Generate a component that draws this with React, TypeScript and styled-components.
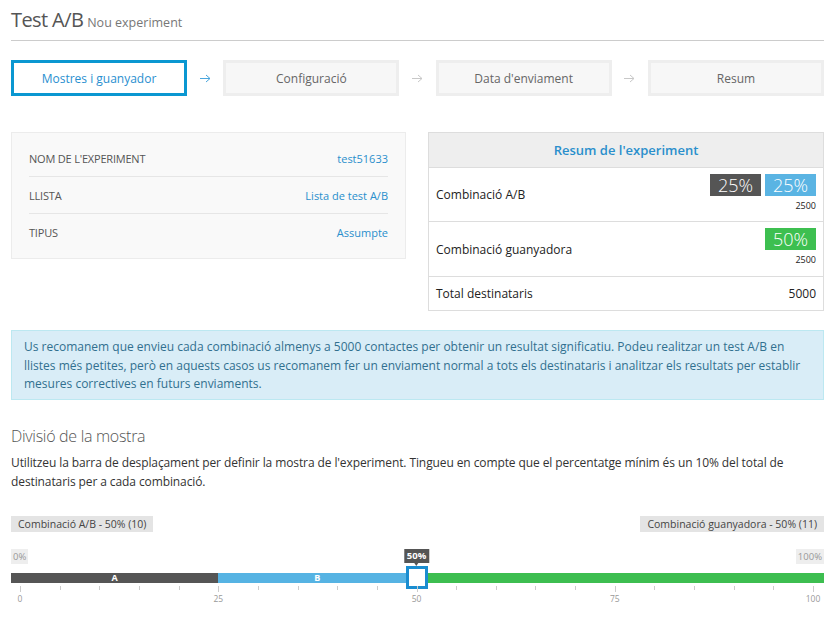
import React from 'react';
import styled, { createGlobalStyle } from 'styled-components';

const GlobalStyle = createGlobalStyle`
  html, body {
    margin: 0;
    padding: 0;
    background: #fff;
  }
  body {
    font-family: 'Open Sans', 'Liberation Sans', Arial, sans-serif;
    color: #333;
  }
`;

const Page = styled.div`
  width: 813px;
  padding: 0 7px 0 11px;
`;

const Header = styled.div`
  display: flex;
  align-items: baseline;
  align-content: flex-end;
  flex-wrap: wrap;
  gap: 4px;
  height: 41px;
  box-sizing: border-box;
  padding-bottom: 7px;
  border-bottom: 1px solid #ccc;
`;

const Title = styled.h1`
  margin: 0;
  font-size: 20px;
  font-weight: 400;
  color: #555;
  letter-spacing: -0.6px;
`;

const Subtitle = styled.span`
  font-size: 12.5px;
  color: #777;
`;

const Steps = styled.div`
  display: flex;
  align-items: center;
  margin-top: 19px;
`;

const Step = styled.div<{ active?: boolean }>`
  flex: 0 0 176px;
  height: 36px;
  box-sizing: border-box;
  border: 3px solid ${(p) => (p.active ? '#0a97d1' : '#eee')};
  background: ${(p) => (p.active ? '#fff' : '#f7f7f7')};
  color: ${(p) => (p.active ? '#2a8fcf' : '#666')};
  font-size: 12px;
  display: flex;
  align-items: center;
  justify-content: center;
`;

const ArrowCell = styled.div`
  flex: 1;
  display: flex;
  align-items: center;
  justify-content: center;
`;

const Columns = styled.div`
  display: flex;
  gap: 22px;
  margin-top: 36px;
  align-items: flex-start;
`;

const InfoBox = styled.div`
  flex: 0 0 395px;
  box-sizing: border-box;
  height: 127px;
  background: #f9f9f9;
  border: 1px solid #ececec;
  padding: 7px 17px;
`;

const InfoRow = styled.div`
  display: flex;
  justify-content: space-between;
  align-items: center;
  height: 37px;
  box-sizing: border-box;
  font-size: 11px;
  border-bottom: 1px solid #e6e6e6;
  &:last-child {
    border-bottom: none;
  }
`;

const InfoLabel = styled.span`
  color: #555;
  text-transform: uppercase;
  letter-spacing: -0.2px;
`;

const InfoValue = styled.span`
  color: #2a8fcc;
`;

const Summary = styled.div`
  flex: 1;
  border: 1px solid #ddd;
  font-size: 12px;
  color: #222;
`;

const SummaryHead = styled.div`
  height: 34px;
  background: #eee;
  border-bottom: 1px solid #ddd;
  display: flex;
  align-items: center;
  justify-content: center;
  color: #2a8fcc;
  font-size: 13px;
  font-weight: 600;
`;

const SummaryRow = styled.div<{ h: number }>`
  height: ${(p) => p.h}px;
  box-sizing: border-box;
  display: flex;
  align-items: center;
  justify-content: space-between;
  padding: 0 7px;
  border-bottom: 1px solid #ddd;
  &:last-child {
    border-bottom: none;
  }
`;

const BadgeCol = styled.div`
  display: flex;
  flex-direction: column;
  align-items: flex-end;
  align-self: flex-start;
  padding-top: 6px;
`;

const Badges = styled.div`
  display: flex;
  gap: 4px;
`;

const Badge = styled.span<{ color: string }>`
  width: 51px;
  height: 22px;
  display: flex;
  align-items: center;
  justify-content: center;
  background: ${(p) => p.color};
  color: #fff;
  font-size: 18px;
  font-weight: 300;
  line-height: 1;
`;

const Count = styled.span`
  font-size: 9px;
  color: #222;
  margin-top: 3px;
`;

const Alert = styled.div`
  margin-top: 19px;
  background: #d9edf7;
  border: 1px solid #bce8f1;
  color: #31708f;
  font-size: 12px;
  line-height: 18.5px;
  padding: 7px 12px 5px;
`;

const SectionTitle = styled.h2`
  margin: 25px 0 0;
  font-size: 16px;
  line-height: 22px;
  font-weight: 300;
  color: #555;
  letter-spacing: -0.3px;
`;

const Description = styled.p`
  margin: 6px 0 0;
  font-size: 12px;
  line-height: 19px;
  color: #333;
  letter-spacing: -0.1px;
`;

const LabelRow = styled.div`
  display: flex;
  justify-content: space-between;
  margin-top: 25px;
`;

const GroupLabel = styled.span`
  background: #e4e4e4;
  color: #444;
  font-size: 10.5px;
  height: 16px;
  line-height: 16px;
  padding: 0 7px;
`;

const Slider = styled.div`
  position: relative;
  margin-top: 17px;
  height: 70px;
`;

const EdgeRow = styled.div`
  display: flex;
  justify-content: space-between;
`;

const EdgeLabel = styled.span`
  background: #eee;
  color: #999;
  font-size: 9.5px;
  height: 15px;
  line-height: 15px;
  padding: 0 2px;
`;

const Bar = styled.div`
  display: flex;
  height: 10px;
  margin-top: 9px;
`;

const Segment = styled.div<{ color: string; grow?: boolean }>`
  background: ${(p) => p.color};
  ${(p) => (p.grow ? 'flex: 1;' : '')}
  color: #fff;
  font-size: 9px;
  font-weight: 700;
  line-height: 10px;
  text-align: center;
`;

const Handle = styled.div`
  position: absolute;
  top: 17px;
  width: 22px;
  height: 23px;
  box-sizing: border-box;
  margin-left: -11px;
  background: #fff;
  border: 3px solid #1a8dd0;
`;

const Tip = styled.div`
  position: absolute;
  top: 0;
  transform: translateX(-50%);
  background: #555;
  color: #fff;
  font-size: 9.5px;
  font-weight: 700;
  height: 14px;
  line-height: 14px;
  padding: 0 3px;
  &::after {
    content: '';
    position: absolute;
    left: 50%;
    bottom: -3px;
    margin-left: -2px;
    border-left: 2px solid transparent;
    border-right: 2px solid transparent;
    border-top: 3px solid #555;
  }
`;

const Grid = styled.div`
  position: relative;
  height: 30px;
`;

const Tick = styled.span<{ major?: boolean }>`
  position: absolute;
  top: 3px;
  width: 1px;
  height: ${(p) => (p.major ? 6 : 4)}px;
  background: #ccc;
`;

const TickLabel = styled.span`
  position: absolute;
  top: 10px;
  transform: translateX(-50%);
  font-size: 8.5px;
  color: #999;
`;

const Arrow = ({ color }: { color: string }) => (
  <svg width="11" height="9" viewBox="0 0 11 9">
    <path d="M0 4.5h10M6 1l4 3.5L6 8" fill="none" stroke={color} strokeWidth="1" />
  </svg>
);

const steps = ['Mostres i guanyador', 'Configuració', "Data d'enviament", 'Resum'];

const SCALE_START = 9;
const SCALE_LEN = 793;
const pos = (v: number) => SCALE_START + (SCALE_LEN * v) / 100;

export default function App() {
  const ticks = Array.from({ length: 21 }, (_, i) => i * 5);
  return (
    <Page>
      <GlobalStyle />
      <Header>
        <Title>Test A/B</Title>
        <Subtitle>Nou experiment</Subtitle>
      </Header>

      <Steps>
        {steps.map((s, i) => (
          <React.Fragment key={s}>
            {i > 0 && (
              <ArrowCell>
                <Arrow color={i === 1 ? '#4aa6dd' : '#c8c8c8'} />
              </ArrowCell>
            )}
            <Step active={i === 0}>{s}</Step>
          </React.Fragment>
        ))}
      </Steps>

      <Columns>
        <InfoBox>
          <InfoRow>
            <InfoLabel>Nom de l'experiment</InfoLabel>
            <InfoValue>test51633</InfoValue>
          </InfoRow>
          <InfoRow>
            <InfoLabel>Llista</InfoLabel>
            <InfoValue>Lista de test A/B</InfoValue>
          </InfoRow>
          <InfoRow>
            <InfoLabel>Tipus</InfoLabel>
            <InfoValue>Assumpte</InfoValue>
          </InfoRow>
        </InfoBox>

        <Summary>
          <SummaryHead>Resum de l'experiment</SummaryHead>
          <SummaryRow h={54}>
            <span>Combinació A/B</span>
            <BadgeCol>
              <Badges>
                <Badge color="#555">25%</Badge>
                <Badge color="#5ab4e3">25%</Badge>
              </Badges>
              <Count>2500</Count>
            </BadgeCol>
          </SummaryRow>
          <SummaryRow h={55}>
            <span>Combinació guanyadora</span>
            <BadgeCol>
              <Badge color="#3dbf50">50%</Badge>
              <Count>2500</Count>
            </BadgeCol>
          </SummaryRow>
          <SummaryRow h={33}>
            <span>Total destinataris</span>
            <span>5000</span>
          </SummaryRow>
        </Summary>
      </Columns>

      <Alert>
        Us recomanem que envieu cada combinació almenys a 5000 contactes per obtenir un resultat significatiu. Podeu
        realitzar un test A/B en llistes més petites, però en aquests casos us recomanem fer un enviament normal a tots
        els destinataris i analitzar els resultats per establir mesures correctives en futurs enviaments.
      </Alert>

      <SectionTitle>Divisió de la mostra</SectionTitle>
      <Description>
        Utilitzeu la barra de desplaçament per definir la mostra de l'experiment. Tingueu en compte que el percentatge
        mínim és un 10% del total de destinataris per a cada combinació.
      </Description>

      <LabelRow>
        <GroupLabel>Combinació A/B - 50% (10)</GroupLabel>
        <GroupLabel>Combinació guanyadora - 50% (11)</GroupLabel>
      </LabelRow>

      <Slider>
        <EdgeRow>
          <EdgeLabel>0%</EdgeLabel>
          <EdgeLabel>100%</EdgeLabel>
        </EdgeRow>
        <Bar>
          <Segment color="#555" style={{ width: pos(25) }}>
            A
          </Segment>
          <Segment color="#56b3e3" style={{ width: pos(50) - pos(25) }}>
            B
          </Segment>
          <Segment color="#3dbe50" grow />
        </Bar>
        <Handle style={{ left: pos(50) }} />
        <Tip style={{ left: pos(50) }}>50%</Tip>
        <Grid>
          {ticks.map((t) => (
            <Tick key={t} major={t % 25 === 0} style={{ left: pos(t) }} />
          ))}
          {[0, 25, 50, 75, 100].map((t) => (
            <TickLabel key={t} style={{ left: pos(t) }}>
              {t}
            </TickLabel>
          ))}
        </Grid>
      </Slider>
    </Page>
  );
}
